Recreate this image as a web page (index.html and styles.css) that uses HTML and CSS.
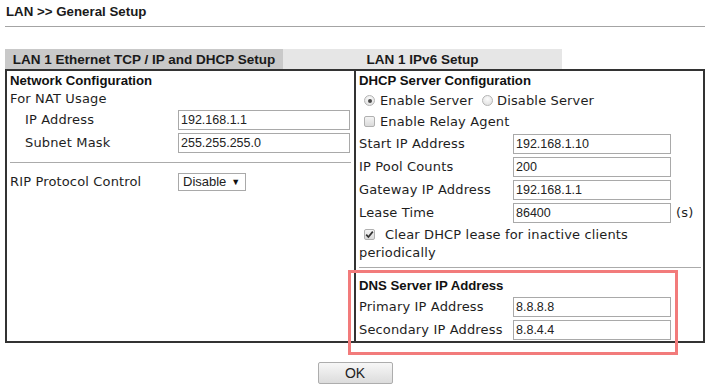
FILE: index.html
```html
<!DOCTYPE html>
<html>
<head>
<meta charset="utf-8">
<title>LAN General Setup</title>
<link rel="stylesheet" href="styles.css">
</head>
<body>
<div class="page">
  <h1 class="title">LAN &gt;&gt; General Setup</h1>
  <hr class="rule">
  <div class="tabs">
    <div class="tab active">LAN 1 Ethernet TCP / IP and DHCP Setup</div>
    <div class="tab">LAN 1 IPv6 Setup</div>
  </div>
  <div class="panel">
    <div class="col left">
      <div class="head">Network Configuration</div>
      <div class="text-row">For NAT Usage</div>
      <div class="row indent"><span class="lbl">IP Address</span><span class="field">192.168.1.1</span></div>
      <div class="row indent"><span class="lbl">Subnet Mask</span><span class="field">255.255.255.0</span></div>
      <div class="sep"></div>
      <div class="row rip"><span class="lbl">RIP Protocol Control</span><span class="select">Disable<span class="arrow">&#9660;</span></span></div>
    </div>
    <div class="col right">
      <div class="head">DHCP Server Configuration</div>
      <div class="opt-row">
        <span class="radio on"></span><span class="opt">Enable Server</span>
        <span class="radio"></span><span class="opt">Disable Server</span>
      </div>
      <div class="opt-row">
        <span class="check"></span><span class="opt">Enable Relay Agent</span>
      </div>
      <div class="row"><span class="lbl">Start IP Address</span><span class="field">192.168.1.10</span></div>
      <div class="row"><span class="lbl">IP Pool Counts</span><span class="field">200</span></div>
      <div class="row"><span class="lbl">Gateway IP Address</span><span class="field">192.168.1.1</span></div>
      <div class="row"><span class="lbl">Lease Time</span><span class="field">86400</span><span class="unit">(s)</span></div>
      <div class="clear-block"><span class="check on"><svg viewBox="0 0 11 11" width="11" height="11"><path d="M2.2 5.6 L4.4 8 L8.8 2.6" fill="none" stroke="#333" stroke-width="1.7"/></svg></span><span class="clear-text">Clear DHCP lease for inactive clients</span><br>periodically</div>
      <div class="sep"></div>
      <div class="head dns">DNS Server IP Address</div>
      <div class="row"><span class="lbl">Primary IP Address</span><span class="field">8.8.8.8</span></div>
      <div class="row"><span class="lbl">Secondary IP Address</span><span class="field">8.8.4.4</span></div>
    </div>
  </div>
  <div class="actions"><button class="ok" type="button">OK</button></div>
  <div class="highlight"></div>
</div>
</body>
</html>
```
FILE: styles.css
```css
* { box-sizing: border-box; }
html, body { margin: 0; padding: 0; background: #fff; }
body {
  font-family: "DejaVu Sans", Verdana, sans-serif;
  font-size: 13px;
  letter-spacing: 0.15px;
  color: #1e1e1e;
}
.page {
  position: relative;
  width: 712px;
  height: 388px;
  padding: 0 7px 0 5px;
}
.title {
  margin: 4px 0 0 1px;
  font: bold 13.3px/16px "Liberation Sans", Arial, sans-serif;
  letter-spacing: 0;
  color: #1a1a1a;
}
.rule {
  margin: 6px 0 0;
  height: 0;
  border: 0;
  border-top: 1px solid #a4a4a4;
}
.tabs {
  display: flex;
  margin-top: 22px;
  height: 20px;
}
.tab {
  width: 279px;
  display: flex;
  align-items: center;
  justify-content: center;
  font: bold 13.5px "Liberation Sans", Arial, sans-serif;
  letter-spacing: 0;
  background: #e6e6e6;
  color: #1a1a1a;
}
.tab.active {
  width: 278px;
  background: #c9c9c9;
}
.panel {
  display: grid;
  grid-template-columns: 349px 1fr;
  width: 700px;
  border: 2px solid #333;
}
.col.left {
  border-right: 2px solid #333;
  padding: 0 3px;
}
.col.right {
  padding: 0 2px 0 3px;
}
.head {
  height: 19px;
  line-height: 19px;
  font: bold 13.2px/19px "Liberation Sans", Arial, sans-serif;
  letter-spacing: 0;
  color: #111;
}
.text-row {
  height: 18px;
  line-height: 18px;
}
.row {
  display: flex;
  align-items: center;
  height: 23px;
}
.left .lbl { width: 168px; flex: none; }
.left .indent .lbl { padding-left: 15px; }
.right .lbl { width: 154px; flex: none; }
.field {
  height: 20px;
  border: 1px solid #a9a9a9;
  background: #fff;
  padding-left: 2px;
  display: flex;
  align-items: center;
  font: 12.5px "Liberation Sans", Arial, sans-serif;
  letter-spacing: 0;
  color: #222;
}
.left .field { width: 172px; }
.right .field { width: 158px; }
.unit { margin-left: 5px; }
.sep {
  height: 1px;
  background: #ababab;
}
.left .sep { margin: 8px 0 0; }
.row.rip { margin-top: 9px; height: 19px; }
.select {
  display: flex;
  align-items: center;
  width: 68px;
  height: 18px;
  border: 1px solid #a9a9a9;
  background: #fff;
  padding-left: 4px;
  font: 13px "Liberation Sans", Arial, sans-serif;
  letter-spacing: 0;
  color: #222;
}
.arrow {
  font-size: 9px;
  margin-left: 5px;
  color: #111;
}
.opt-row {
  display: flex;
  align-items: center;
  height: 21px;
}
.radio {
  width: 11px;
  height: 11px;
  border-radius: 50%;
  border: 1px solid #b4b4b4;
  background: radial-gradient(circle at 50% 35%, #fbfbfb, #dcdcdc);
  margin: 0 5px 0 5px;
  position: relative;
  flex: none;
}
.radio.on::after {
  content: "";
  position: absolute;
  left: 2.5px;
  top: 2.5px;
  width: 4px;
  height: 4px;
  border-radius: 50%;
  background: #4a4a4a;
}
.opt + .radio { margin-left: 9px; margin-right: 4px; }
.check {
  width: 11px;
  height: 11px;
  border: 1px solid #b0b0b0;
  border-radius: 2px;
  background: linear-gradient(#f4f4f4, #dadada);
  margin: 0 5px 0 5px;
  flex: none;
  display: inline-block;
  position: relative;
}
.check svg {
  position: absolute;
  left: -1px;
  top: -1px;
}
.clear-block {
  margin-top: 2px;
  line-height: 18px;
}
.clear-block .check {
  vertical-align: -1px;
  margin: 0 10px 0 5px;
}
.right .sep { margin: 5px 0 0 0; }
.head.dns { margin-top: 9px; height: 18px; line-height: 18px; }
.actions {
  display: flex;
  justify-content: center;
  margin-top: 19px;
}
.ok {
  width: 75px;
  height: 22px;
  margin: 0;
  padding: 0;
  border: 1px solid #adadad;
  border-radius: 2px;
  background: linear-gradient(#f7f7f7, #dcdcdc);
  font: 14px "Liberation Sans", Arial, sans-serif;
  color: #222;
}
.highlight {
  position: absolute;
  left: 348px;
  top: 266px;
  width: 330px;
  height: 85px;
  border: 3px solid #f27b7b;
  pointer-events: none;
}
```
